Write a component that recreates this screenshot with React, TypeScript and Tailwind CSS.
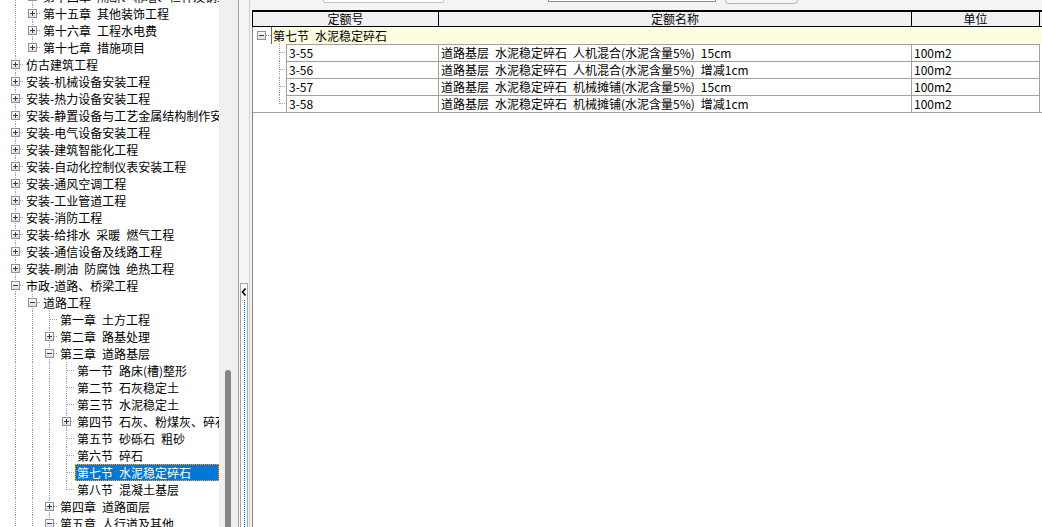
import React from "react";

type Node = {
  level: number;
  text: string;
  exp?: "+" | "-";
  selected?: boolean;
};

const sp = (s: string) => s.replace(/ /g, "\u2002");

const TREE: Node[] = [
  { level: 1, text: "第十四章 隔断、幕墙、栏杆及钢结构工程", exp: "+" },
  { level: 1, text: "第十五章 其他装饰工程", exp: "+" },
  { level: 1, text: "第十六章 工程水电费", exp: "+" },
  { level: 1, text: "第十七章 措施项目", exp: "+" },
  { level: 0, text: "仿古建筑工程", exp: "+" },
  { level: 0, text: "安装-机械设备安装工程", exp: "+" },
  { level: 0, text: "安装-热力设备安装工程", exp: "+" },
  { level: 0, text: "安装-静置设备与工艺金属结构制作安装工程", exp: "+" },
  { level: 0, text: "安装-电气设备安装工程", exp: "+" },
  { level: 0, text: "安装-建筑智能化工程", exp: "+" },
  { level: 0, text: "安装-自动化控制仪表安装工程", exp: "+" },
  { level: 0, text: "安装-通风空调工程", exp: "+" },
  { level: 0, text: "安装-工业管道工程", exp: "+" },
  { level: 0, text: "安装-消防工程", exp: "+" },
  { level: 0, text: "安装-给排水 采暖 燃气工程", exp: "+" },
  { level: 0, text: "安装-通信设备及线路工程", exp: "+" },
  { level: 0, text: "安装-刷油 防腐蚀 绝热工程", exp: "+" },
  { level: 0, text: "市政-道路、桥梁工程", exp: "-" },
  { level: 1, text: "道路工程", exp: "-" },
  { level: 2, text: "第一章 土方工程" },
  { level: 2, text: "第二章 路基处理", exp: "+" },
  { level: 2, text: "第三章 道路基层", exp: "-" },
  { level: 3, text: "第一节 路床(槽)整形" },
  { level: 3, text: "第二节 石灰稳定土" },
  { level: 3, text: "第三节 水泥稳定土" },
  { level: 3, text: "第四节 石灰、粉煤灰、碎石", exp: "+" },
  { level: 3, text: "第五节 砂砾石 粗砂" },
  { level: 3, text: "第六节 碎石" },
  { level: 3, text: "第七节 水泥稳定碎石", selected: true },
  { level: 3, text: "第八节 混凝土基层" },
  { level: 2, text: "第四章 道路面层", exp: "+" },
  { level: 2, text: "第五章 人行道及其他", exp: "-" },
];

// does the branch at depth d (seen from row i) continue below row i?
function continues(i: number, d: number) {
  for (let j = i + 1; j < TREE.length; j++) {
    if (TREE[j].level < d) return false;
    if (TREE[j].level === d) return true;
  }
  return true;
}

const ROWS = [
  { code: "3-55", name: "道路基层 水泥稳定碎石 人机混合(水泥含量5%) 15cm", unit: "100m2" },
  { code: "3-56", name: "道路基层 水泥稳定碎石 人机混合(水泥含量5%) 增减1cm", unit: "100m2" },
  { code: "3-57", name: "道路基层 水泥稳定碎石 机械摊铺(水泥含量5%) 15cm", unit: "100m2" },
  { code: "3-58", name: "道路基层 水泥稳定碎石 机械摊铺(水泥含量5%) 增减1cm", unit: "100m2" },
];

function ExpBox({ cx, cy, open }: { cx: number; cy: number; open: boolean }) {
  return (
    <g>
      <rect x={cx - 3.5} y={cy - 3.5} width={8} height={8} fill="url(#boxfill)" stroke="#919191" />
      <line x1={cx - 2} y1={cy + 0.5} x2={cx + 3} y2={cy + 0.5} stroke="#2f3b58" />
      {!open && <line x1={cx + 0.5} y1={cy - 2} x2={cx + 0.5} y2={cy + 3} stroke="#2f3b58" />}
    </g>
  );
}

function BoxGradient() {
  return (
    <defs>
      <linearGradient id="boxfill" x1="0" y1="0" x2="0" y2="1">
        <stop offset="0" stopColor="#ffffff" />
        <stop offset="1" stopColor="#dcdcdc" />
      </linearGradient>
    </defs>
  );
}

function TreeRow({ node, index }: { node: Node; index: number }) {
  const w = 24 + 17 * node.level;
  const cx = 15 + 17 * node.level;
  const ancestors = Array.from({ length: node.level }, (_, d) => continues(index, d));
  const hasNext = continues(index, node.level);

  return (
    <div className="flex h-[17px] items-center">
      <svg width={w} height={17} className="shrink-0" shapeRendering="crispEdges">
        <BoxGradient />
        <g stroke="#a0a0a0" strokeDasharray="1 1">
          {ancestors.map((on, d) =>
            on ? <line key={d} x1={15 + 17 * d + 0.5} y1={0} x2={15 + 17 * d + 0.5} y2={17} /> : null
          )}
          <line x1={cx + 0.5} y1={0} x2={cx + 0.5} y2={hasNext ? 17 : 9} />
          <line x1={cx + 1} y1={8.5} x2={w} y2={8.5} />
        </g>
        {node.exp && <ExpBox cx={cx} cy={8} open={node.exp === "-"} />}
      </svg>
      <div
        className={
          node.selected
            ? "h-[17px] flex-1 overflow-hidden whitespace-nowrap bg-[#0078d7] pl-[2px] leading-[17px] text-white outline-1 -outline-offset-1 outline-dotted outline-[#f5a23a]"
            : "h-[17px] flex-1 overflow-hidden whitespace-nowrap pl-[2px] leading-[17px]"
        }
      >
        {sp(node.text)}
      </div>
    </div>
  );
}

export default function App() {
  return (
    <div className="flex h-[527px] w-[1042px] overflow-hidden bg-white font-['Noto_Sans_CJK_SC',sans-serif] text-[12px] text-black">
      {/* TREE */}

      <div className="w-[219px] shrink-0 overflow-hidden bg-white">
        <div className="-mt-[12px]">
          {TREE.map((n, i) => (
            <TreeRow key={i} node={n} index={i} />
          ))}
        </div>
      </div>

      {/* SCROLLBAR */}

      <div className="flex w-[19px] shrink-0 flex-col bg-[#f0f0f0]">
        <div className="h-[370px] shrink-0" />
        <div className="ml-[6px] w-[6px] flex-1 rounded-t-[3px] bg-[#858585]" />
      </div>

      {/* SPLITTER */}

      <div className="flex w-[12px] shrink-0 flex-col border-l border-r border-l-[#a0a0a0] border-r-[#cfcfcf] bg-[#f5f5f5]">
        <div className="h-[283px] shrink-0" />
        <div className="mx-[1px] flex flex-1 flex-col items-center border border-b-0 border-[#a8a8a8] bg-[#fafafa]">
          <svg width={6} height={8} className="mt-[4px] shrink-0">
            <polyline points="4.5,0.5 1.5,4 4.5,7.5" fill="none" stroke="#000" strokeWidth={1.6} />
          </svg>
          <div className="mt-[4px] flex-1 border-l border-dotted border-[#1a73d0]" />
        </div>
      </div>

      {/* RIGHT */}

      <div className="flex flex-1 flex-col bg-[#f4f4f4]">
        {/* TOOLBAR (cut off) */}

        <div className="flex h-[10px] shrink-0 items-start">
          <div className="ml-[73px] h-[3px] w-[121px] rounded-b-[2px] border border-t-0 border-[#c4c4c4] bg-white" />
          <div className="ml-[104px] h-[2px] w-[168px] border border-t-0 border-[#8c8c8c] bg-white" />
          <div className="ml-[9px] h-[4px] w-[73px] rounded-b-[4px] border border-t-0 border-[#b4b4b4] bg-[#f7f7f7]" />
        </div>

        {/* TABLE */}

        <div className="ml-[2px] flex flex-1 flex-col border-l border-[#808080] bg-white">
          {/* HEADER */}

          <div className="-ml-px flex h-[17px] shrink-0 border-t-2 border-b border-l border-black bg-[#f0f0f0] leading-[14px]">
            <div className="w-[186px] shrink-0 border-r border-black text-center">定额号</div>
            <div className="w-[473px] shrink-0 border-r border-black text-center">定额名称</div>
            <div className="w-[128px] shrink-0 border-r border-black text-center">单位</div>
            <div className="flex-1" />
          </div>

          {/* GROUP */}

          <div className="flex h-[17px] shrink-0">
            <svg width={18} height={17} className="shrink-0" shapeRendering="crispEdges">
              <BoxGradient />
              <line x1={13} y1={8.5} x2={18} y2={8.5} stroke="#a0a0a0" strokeDasharray="1 1" />
              <ExpBox cx={8} cy={8} open />
            </svg>
            <div className="flex-1 whitespace-nowrap border-l border-[#6a6a6a] bg-[#fffde1] pl-[1px] leading-[17px]">
              {sp("第七节 水泥稳定碎石")}
            </div>
          </div>

          {/* ROWS */}

          {ROWS.map((r, i) => (
            <div key={r.code} className="flex h-[17px] shrink-0">
              <svg width={33} height={17} className="shrink-0" shapeRendering="crispEdges">
                <g stroke="#a0a0a0" strokeDasharray="1 1">
                  <line x1={26.5} y1={0} x2={26.5} y2={i < ROWS.length - 1 ? 17 : 9} />
                  <line x1={27} y1={8.5} x2={33} y2={8.5} />
                </g>
              </svg>
              <div className="w-[153px] shrink-0 whitespace-nowrap border-l border-t border-r border-[#a0a0a0] pl-[2px] leading-[16px]">
                {r.code}
              </div>
              <div className="w-[473px] shrink-0 overflow-hidden whitespace-nowrap border-t border-r border-[#a0a0a0] pl-[2px] leading-[16px]">
                {sp(r.name)}
              </div>
              <div className="w-[128px] shrink-0 whitespace-nowrap border-t border-r border-[#a0a0a0] pl-[2px] leading-[16px]">
                {r.unit}
              </div>
            </div>
          ))}

          <div className="h-px shrink-0 bg-[#a0a0a0]" />
        </div>
      </div>
    </div>
  );
}
